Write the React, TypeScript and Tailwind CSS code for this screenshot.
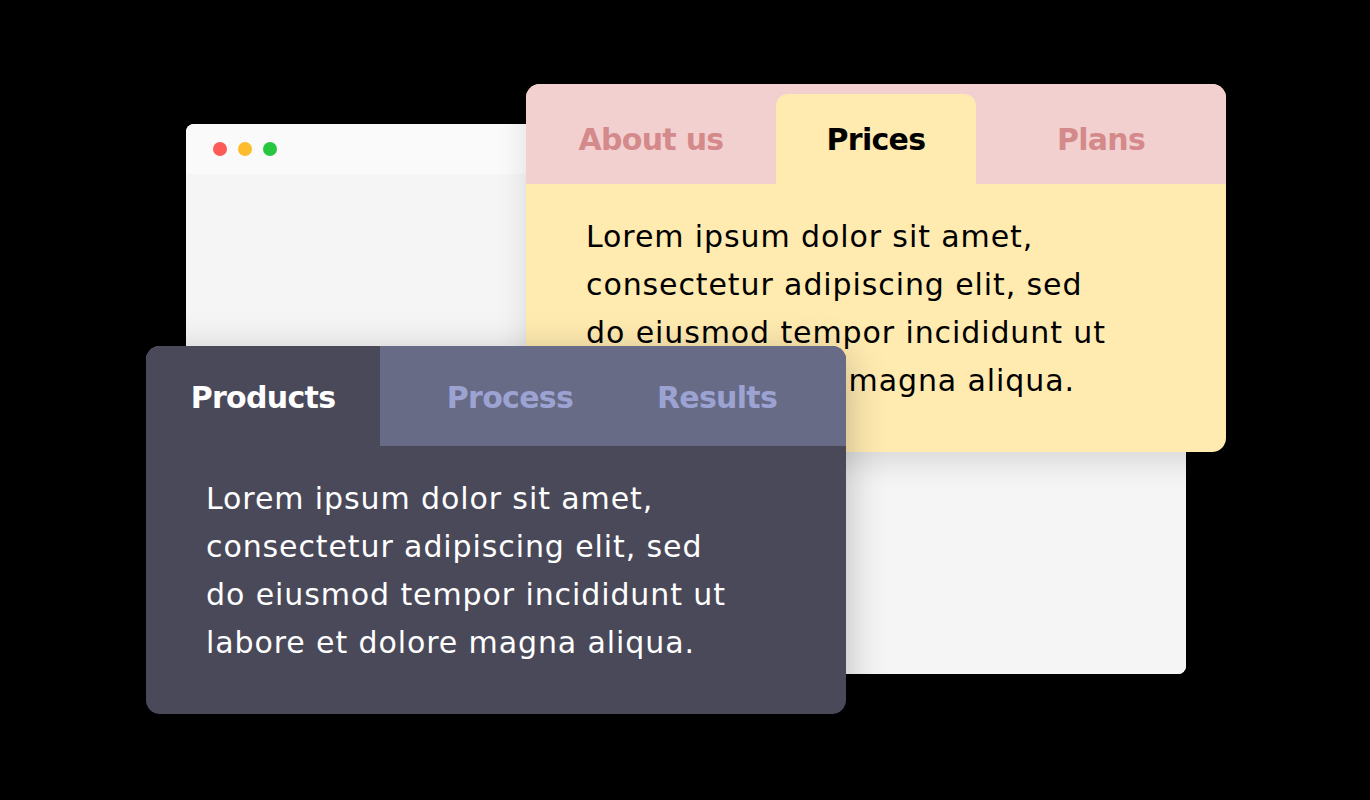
const lorem = [
  "Lorem ipsum dolor sit amet,",
  "consectetur adipiscing elit, sed",
  "do eiusmod tempor incididunt ut",
  "labore et dolore magna aliqua.",
]

function Paragraph({ color }: { color: string }) {
  return (
    <div className={`pl-[60px] pt-[29px] text-[30px] leading-[48px] tracking-[0.9px] ${color}`}>
      {lorem.map((line) => (
        <div key={line} className="whitespace-nowrap">
          {line}
        </div>
      ))}
    </div>
  )
}

function BrowserWindow() {
  return (
    <div className="absolute left-[186px] top-[124px] w-[1000px] h-[550px] rounded-[8px] overflow-hidden bg-[#f5f5f5] flex flex-col">
      <div className="h-[50px] bg-[#fafafa] flex items-center gap-[11px] pl-[27px]">
        <span className="w-[14px] h-[14px] rounded-full bg-[#fc5b57]" />
        <span className="w-[14px] h-[14px] rounded-full bg-[#fdbc2e]" />
        <span className="w-[14px] h-[14px] rounded-full bg-[#27c840]" />
      </div>
      <div className="flex-1 bg-[#f5f5f5]" />
    </div>
  )
}

function PricesCard() {
  return (
    <div className="absolute left-[526px] top-[84px] w-[700px] h-[368px] rounded-[14px] overflow-hidden bg-[#ffeab0] shadow-[0_10px_30px_rgba(0,0,0,0.12)]">
      <div className="h-[100px] bg-[#f2d0cf] flex items-end font-bold text-[30px] tracking-[-0.7px]">
        <div className="w-[250px] h-full flex items-center justify-center pt-[11px] text-[#d4898b]">About us</div>
        <div className="w-[200px] h-[90px] rounded-t-[12px] bg-[#ffeab0] flex items-center justify-center pt-[1px] text-black">
          Prices
        </div>
        <div className="w-[250px] h-full flex items-center justify-center pt-[11px] text-[#d4898b]">Plans</div>
      </div>
      <Paragraph color="text-black" />
    </div>
  )
}

function ProductsCard() {
  return (
    <div className="absolute left-[146px] top-[346px] w-[700px] h-[368px] rounded-[14px] overflow-hidden bg-[#4a4959] shadow-[0_10px_40px_rgba(0,0,0,0.25)]">
      <div className="h-[100px] bg-[#676b86] flex font-bold text-[30px] tracking-[-0.7px]">
        <div className="w-[234px] h-full bg-[#4a4959] flex items-center justify-center pt-[2px] text-white">Products</div>
        <div className="w-[260px] h-full flex items-center justify-center pt-[2px] text-[#9ca3d3]">Process</div>
        <div className="w-[154px] h-full flex items-center justify-center pt-[2px] text-[#9ca3d3]">Results</div>
      </div>
      <Paragraph color="text-white" />
    </div>
  )
}

export default function App() {
  return (
    <div className="relative w-[1370px] h-[800px] bg-black overflow-hidden font-['DejaVu_Sans',sans-serif]">
      <BrowserWindow />
      <PricesCard />
      <ProductsCard />
    </div>
  )
}
